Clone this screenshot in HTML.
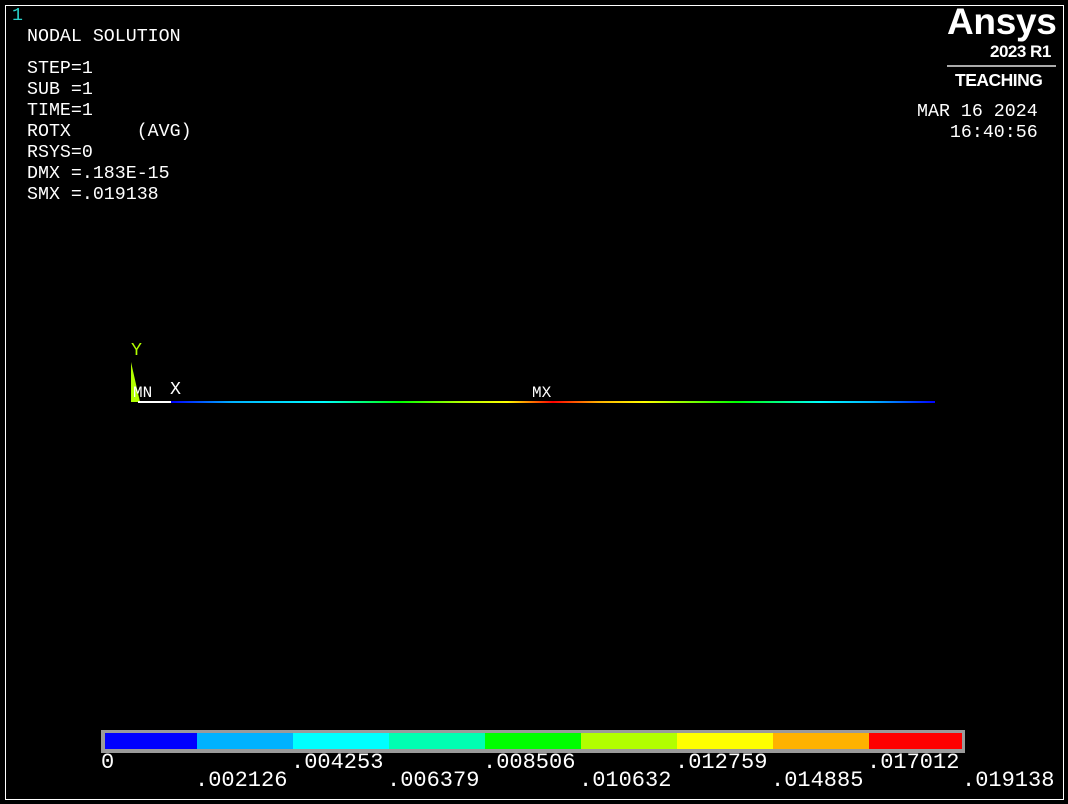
<!DOCTYPE html><html><head><style>
body{margin:0;background:#000;width:1068px;height:804px;overflow:hidden;position:relative;font-family:"Liberation Mono",monospace;}
.f{position:absolute;left:5px;top:5px;width:1057px;height:793px;border:1px solid #fff;}
.t{position:absolute;color:#fff;font-size:18.3px;white-space:pre;line-height:21px;}
.seg{position:absolute;top:733px;height:16px;}
.lb{position:absolute;color:#fff;font-size:22px;line-height:22px;white-space:pre;}
</style></head><body>
<div class="f"></div>
<div class="t" style="left:12px;top:6px;color:#28d0c8">1</div>
<div class="t" style="left:27px;top:27px">NODAL SOLUTION</div>
<div class="t" style="left:27px;top:59px">STEP=1
SUB =1
TIME=1
ROTX      (AVG)
RSYS=0
DMX =.183E-15
SMX =.019138</div>
<div style="position:absolute;left:947px;top:1px;color:#fff;font-family:'Liberation Sans',sans-serif;font-weight:bold;font-size:37px;letter-spacing:-0.3px">Ansys</div>
<div style="position:absolute;left:990px;top:42px;color:#fff;font-family:'Liberation Sans',sans-serif;font-weight:bold;font-size:17px;letter-spacing:-0.5px">2023 R1</div>
<div style="position:absolute;left:947px;top:65px;width:109px;height:2px;background:#aaa"></div>
<div style="position:absolute;left:955px;top:70px;color:#fff;font-family:'Liberation Sans',sans-serif;font-weight:bold;font-size:17.5px;letter-spacing:-0.5px">TEACHING</div>
<div class="t" style="left:917px;top:102px">MAR 16 2024
   16:40:56</div>
<div class="t" style="left:131px;top:341px;color:#b2ff00">Y</div>
<div style="position:absolute;left:131px;top:362px;width:0;height:0;border-left:9px solid #b2ff00;border-top:40px solid transparent"></div>
<div class="t" style="left:133px;top:383px;font-size:16px">MN</div>
<div class="t" style="left:170px;top:380px">X</div>
<div class="t" style="left:532px;top:383px;font-size:16px">MX</div>
<div style="position:absolute;left:138px;top:401px;width:33px;height:2px;background:#fff"></div>
<div style="position:absolute;left:171px;top:401px;width:764px;height:2px;background:linear-gradient(90deg,#00f 0%,#00b2ff 8%,#0ff 20%,#00ff00 30%,#b2ff00 38%,#ff0 44%,#ff0000 50%,#ffb200 56%,#ff0 62%,#00ff00 74%,#0ff 85%,#00b2ff 92%,#00f 100%)"></div>
<div style="position:absolute;left:101px;top:730px;width:864px;height:23px;background:#9a9a9a"></div>
<div class="seg" style="left:105px;width:92px;background:#00f"></div>
<div class="seg" style="left:197px;width:96px;background:#00b2ff"></div>
<div class="seg" style="left:293px;width:96px;background:#0ff"></div>
<div class="seg" style="left:389px;width:96px;background:#00ffb2"></div>
<div class="seg" style="left:485px;width:96px;background:#00ff00"></div>
<div class="seg" style="left:581px;width:96px;background:#b2ff00"></div>
<div class="seg" style="left:677px;width:96px;background:#ff0"></div>
<div class="seg" style="left:773px;width:96px;background:#ffb200"></div>
<div class="seg" style="left:869px;width:93px;background:#f00"></div>
<div class="lb" style="left:101px;top:752px">0</div>
<div class="lb" style="left:291px;top:752px">.004253</div>
<div class="lb" style="left:483px;top:752px">.008506</div>
<div class="lb" style="left:675px;top:752px">.012759</div>
<div class="lb" style="left:867px;top:752px">.017012</div>
<div class="lb" style="left:195px;top:770px">.002126</div>
<div class="lb" style="left:387px;top:770px">.006379</div>
<div class="lb" style="left:579px;top:770px">.010632</div>
<div class="lb" style="left:771px;top:770px">.014885</div>
<div class="lb" style="left:962px;top:770px">.019138</div>
</body></html>
